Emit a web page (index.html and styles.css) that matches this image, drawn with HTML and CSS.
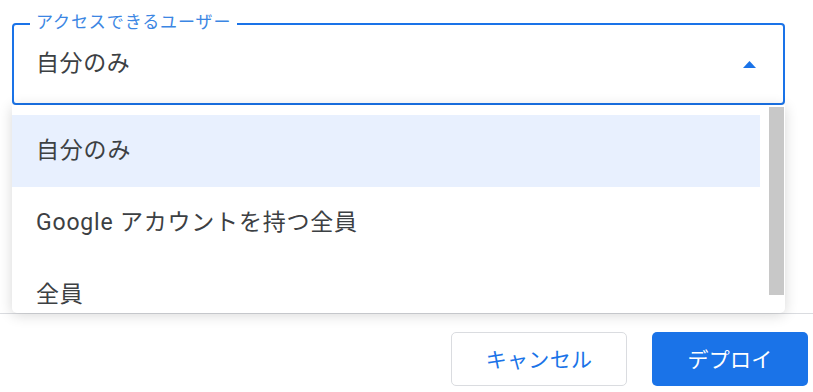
FILE: index.html
```html
<!DOCTYPE html>
<html lang="ja">
  <head>
    <meta charset="UTF-8" />
    <meta name="viewport" content="width=device-width, initial-scale=1.0" />
    <title>デプロイ</title>
    <link rel="stylesheet" href="styles.css">
  </head>

  <body>
    <div class="field-wrap">
      <div class="field">
        <span class="field-label">アクセスできるユーザー</span>
        <span class="field-value">自分のみ</span>
        <svg class="arrow" width="13" height="7" viewBox="0 0 13 7">
          <path d="M0 7 L6.5 0 L13 7 Z" fill="#1a73e8" />
        </svg>
      </div>
    </div>
    <div class="menu">
      <div class="options">
        <div class="option selected">自分のみ</div>
        <div class="option">Google アカウントを持つ全員</div>
        <div class="option">全員</div>
      </div>
      <div class="scroll-track">
        <div class="scroll-thumb"></div>
      </div>
    </div>
    <div class="footer">
      <button class="btn cancel">キャンセル</button>
      <button class="btn deploy">デプロイ</button>
    </div>
  </body>
</html>
```

FILE: styles.css
```css
* {
  padding: 0;
  margin: 0;
  box-sizing: border-box;
}

body {
  width: 813px;
  height: 392px;
  display: flex;
  flex-direction: column;
  overflow: hidden;
  background: white;
  font-family: Roboto, "Noto Sans CJK JP", sans-serif;
  color: #3c4043;
}

.field-wrap {
  padding: 23px 28px 0 12px;
}

.field {
  position: relative;
  height: 82px;
  border: 2px solid #1a73e8;
  border-radius: 4px;
  display: flex;
  align-items: center;
  padding: 0 27px 6px 22px;
}

.field-label {
  position: absolute;
  top: -14px;
  left: 16px;
  padding: 0 6px 0 6px;
  background: white;
  font-size: 17px;
  line-height: 22px;
  letter-spacing: 0.9px;
  color: #3b86e3;
}

.field-value {
  flex: 1;
  font-size: 23px;
  letter-spacing: 0.6px;
}

.arrow {
  display: block;
  margin-top: 6px;
}

.menu {
  position: relative;
  z-index: 1;
  height: 208px;
  margin: 0 28px 0 12px;
  background: white;
  border-radius: 0 0 5px 5px;
  box-shadow: 0 2px 14px rgba(0, 0, 0, 0.16);
  display: flex;
  overflow: hidden;
}

.options {
  flex: 1;
  padding: 10px 9px 0 0;
}

.option {
  height: 72px;
  display: flex;
  align-items: center;
  padding: 0 0 6px 24px;
  font-size: 23px;
  letter-spacing: 0.8px;
  white-space: nowrap;
}

.option.selected {
  background: #e8f0fe;
}

.scroll-track {
  width: 15px;
  margin-right: 1px;
  padding-top: 2px;
}

.scroll-thumb {
  height: 188px;
  background: #c8c8c8;
}

.footer {
  border-top: 1px solid #dadce0;
  padding: 18px 5px 0 0;
  display: flex;
  justify-content: flex-end;
  gap: 25px;
}

.btn {
  height: 54px;
  border-radius: 5px;
  font-family: Roboto, "Noto Sans CJK JP", sans-serif;
  font-size: 21px;
  letter-spacing: 0.3px;
  padding-bottom: 3px;
  cursor: pointer;
}

.cancel {
  width: 176px;
  background: white;
  border: 1px solid #dadce0;
  color: #1a73e8;
}

.deploy {
  width: 156px;
  background: #1a73e8;
  border: none;
  color: white;
}
```
